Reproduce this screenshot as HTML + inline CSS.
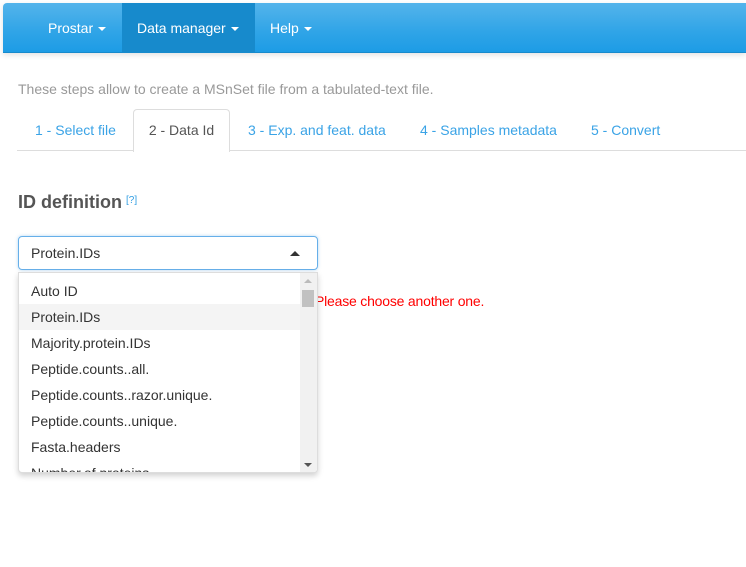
<!DOCTYPE html>
<html><head><meta charset="utf-8"><style>
*{box-sizing:border-box}
body{margin:0;width:746px;height:567px;overflow:hidden;background:#fff;font-family:"Liberation Sans",Arial,sans-serif;font-size:14px;color:#555;position:relative}
.nav{position:absolute;left:3px;top:3px;width:743px;height:50px;background:linear-gradient(#54b4eb,#2fa4e7 60%,#1d9ce5);border-bottom:1px solid #178acc;border-radius:4px 0 0 0;box-shadow:0 2px 6px rgba(0,0,0,.12)}
.nav a{position:absolute;top:0;height:49px;line-height:50px;color:#fff;font-size:14px;padding:0 15px}
.nav a.act{background:#178acc}
.caret{display:inline-block;width:0;height:0;border-left:4px solid transparent;border-right:4px solid transparent;border-top:4px solid #fff;vertical-align:middle;margin-left:5px}
.p{position:absolute;left:18px;top:81px;color:#999;font-size:14px}
.tabs{position:absolute;left:17px;top:150px;width:729px;border-top:1px solid #ddd}
.tab{position:absolute;top:122px;color:#3aa3e6;font-size:14px}
.tabact{position:absolute;left:133px;top:109px;width:97px;height:43px;border:1px solid #ddd;border-bottom:none;border-radius:4px 4px 0 0;background:#fff;color:#555;text-align:center;line-height:41px}
h3{position:absolute;left:18px;top:192px;margin:0;font-size:18px;font-weight:bold;color:#555}
h3 sup{font-size:10px;color:#319ee3;font-weight:normal;vertical-align:top;position:relative;top:3px;margin-left:4px}
.sel{position:absolute;left:18px;top:236px;width:300px;height:34px;border:1px solid #66afe9;border-radius:4px;padding:8px 12px;color:#333;box-shadow:0 0 3px rgba(102,175,233,.5)}
.up{position:absolute;right:17px;top:14px;width:0;height:0;border-left:5px solid transparent;border-right:5px solid transparent;border-bottom:5px solid #333}
.dd{position:absolute;left:18px;top:272px;width:300px;height:201px;border:1px solid #ddd;border-radius:0 0 4px 4px;background:#fff;box-shadow:0 3px 6px rgba(0,0,0,.18);overflow:hidden}
.dd div.o{height:26px;line-height:26px;padding-left:12px;color:#333;width:282px;white-space:nowrap}
.dd div.h{background:#f4f4f4}
.sb{position:absolute;right:0;top:0;width:17px;height:201px;background:#f1f1f1}
.err{position:absolute;left:315px;top:293px;color:#f00;font-size:14px;letter-spacing:-0.2px}
</style></head><body>
<div class="nav">
<a style="left:30px">Prostar<span class="caret"></span></a>
<a class="act" style="left:119px;width:133px">Data manager<span class="caret"></span></a>
<a style="left:252px">Help<span class="caret"></span></a>
</div>
<div class="p">These steps allow to create a MSnSet file from a tabulated-text file.</div>
<div class="tabs"></div>
<div class="tab" style="left:35px">1 - Select file</div>
<div class="tabact">2 - Data Id</div>
<div class="tab" style="left:248px">3 - Exp. and feat. data</div>
<div class="tab" style="left:420px">4 - Samples metadata</div>
<div class="tab" style="left:591px">5 - Convert</div>
<h3>ID definition<sup>[?]</sup></h3>
<div class="err">Please choose another one.</div>
<div class="sel">Protein.IDs<span class="up"></span></div>
<div class="dd">
<div style="height:5px"></div>
<div class="o">Auto ID</div>
<div class="o h">Protein.IDs</div>
<div class="o">Majority.protein.IDs</div>
<div class="o">Peptide.counts..all.</div>
<div class="o">Peptide.counts..razor.unique.</div>
<div class="o">Peptide.counts..unique.</div>
<div class="o">Fasta.headers</div>
<div class="o">Number.of.proteins</div>
<div class="sb">
<div style="position:absolute;left:4px;top:6px;border-left:4px solid transparent;border-right:4px solid transparent;border-bottom:4px solid #bbb"></div>
<div style="position:absolute;left:2px;top:17px;width:12px;height:17px;background:#c1c1c1"></div>
<div style="position:absolute;left:4px;bottom:7px;border-left:4px solid transparent;border-right:4px solid transparent;border-top:4px solid #555"></div>
</div>
</div>
</body></html>
